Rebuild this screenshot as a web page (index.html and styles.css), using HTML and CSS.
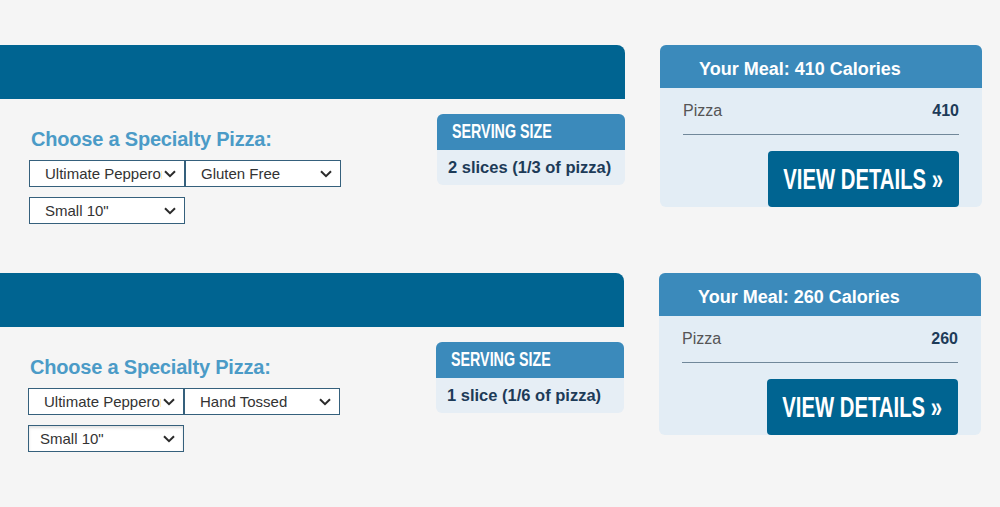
FILE: index.html
```html
<!DOCTYPE html>
<html lang="en">
<head>
  <meta charset="UTF-8">
  <title>Nutrition Calculator</title>
  <link rel="stylesheet" href="styles.css">
</head>
<body>
  <main class="meals">

    <section class="meal">
      <div class="builder">
        <div class="builder-bar"></div>
        <div class="builder-body">
          <div class="picker">
            <h2>Choose a Specialty Pizza:</h2>
            <div class="selects">
              <div class="select-wrap">
                <select><option>Ultimate Pepperoni</option></select>
                <svg class="chevron" viewBox="0 0 12 8"><polyline points="1,1.2 6,6.2 11,1.2"/></svg>
              </div>
              <div class="select-wrap">
                <select><option>Gluten Free</option></select>
                <svg class="chevron" viewBox="0 0 12 8"><polyline points="1,1.2 6,6.2 11,1.2"/></svg>
              </div>
              <div class="select-wrap">
                <select><option>Small 10"</option></select>
                <svg class="chevron" viewBox="0 0 12 8"><polyline points="1,1.2 6,6.2 11,1.2"/></svg>
              </div>
            </div>
          </div>
          <div class="serving">
            <div class="serving-title"><span>SERVING SIZE</span></div>
            <div class="serving-value">2 slices (1/3 of pizza)</div>
          </div>
        </div>
      </div>
      <aside class="summary">
        <div class="summary-head">Your Meal: 410 Calories</div>
        <div class="summary-body">
          <div class="summary-row">
            <span class="item">Pizza</span>
            <span class="cal">410</span>
          </div>
          <a class="details-btn" href="#"><span>VIEW DETAILS &raquo;</span></a>
        </div>
      </aside>
    </section>

    <section class="meal shifted">
      <div class="builder">
        <div class="builder-bar"></div>
        <div class="builder-body">
          <div class="picker">
            <h2>Choose a Specialty Pizza:</h2>
            <div class="selects">
              <div class="select-wrap">
                <select><option>Ultimate Pepperoni</option></select>
                <svg class="chevron" viewBox="0 0 12 8"><polyline points="1,1.2 6,6.2 11,1.2"/></svg>
              </div>
              <div class="select-wrap">
                <select><option>Hand Tossed</option></select>
                <svg class="chevron" viewBox="0 0 12 8"><polyline points="1,1.2 6,6.2 11,1.2"/></svg>
              </div>
              <div class="select-wrap">
                <select class="focused"><option>Small 10"</option></select>
                <svg class="chevron" viewBox="0 0 12 8"><polyline points="1,1.2 6,6.2 11,1.2"/></svg>
              </div>
            </div>
          </div>
          <div class="serving">
            <div class="serving-title"><span>SERVING SIZE</span></div>
            <div class="serving-value">1 slice (1/6 of pizza)</div>
          </div>
        </div>
      </div>
      <aside class="summary">
        <div class="summary-head">Your Meal: 260 Calories</div>
        <div class="summary-body">
          <div class="summary-row">
            <span class="item">Pizza</span>
            <span class="cal">260</span>
          </div>
          <a class="details-btn" href="#"><span>VIEW DETAILS &raquo;</span></a>
        </div>
      </aside>
    </section>

  </main>
</body>
</html>
```

FILE: styles.css
```css
body {
  margin: 0;
  font-family: 'Liberation Sans', Arial, sans-serif;
  background-color: #f5f5f5;
  color: #333333;
}

.meals {
  display: flex;
  flex-direction: column;
  gap: 49px;
  padding-top: 45px;
}

.meal {
  display: flex;
  align-items: flex-start;
}

.meal.shifted {
  margin-left: -1px;
}

.builder {
  width: 625px;
}

.builder-bar {
  height: 54px;
  background: #006491;
  border-top-right-radius: 8px;
}

.builder-body {
  display: flex;
  justify-content: space-between;
  align-items: flex-start;
}

.picker {
  padding-left: 29px;
}

.picker h2 {
  margin: 28px 0 9px;
  padding-left: 2px;
  font-size: 20px;
  line-height: 24px;
  letter-spacing: -0.2px;
  color: #4b9bc7;
}

.selects {
  display: flex;
  flex-wrap: wrap;
  width: 312px;
  row-gap: 10px;
}

.select-wrap {
  position: relative;
  width: 156px;
  height: 27px;
}

.select-wrap select {
  appearance: none;
  -webkit-appearance: none;
  box-sizing: border-box;
  width: 100%;
  height: 27px;
  margin: 0;
  padding: 0 22px 0 15px;
  border: 1px solid #35607c;
  border-radius: 0;
  background: #ffffff;
  font-family: 'Liberation Sans', Arial, sans-serif;
  font-size: 15px;
  color: #333333;
  outline: none;
}

.select-wrap select.focused {
  padding-left: 11px;
  box-shadow: inset 0 2px 3px rgba(0, 0, 0, 0.12);
}

.chevron {
  position: absolute;
  right: 9px;
  top: 10px;
  width: 12px;
  height: 8px;
  pointer-events: none;
}

.chevron polyline {
  fill: none;
  stroke: #2b2b2b;
  stroke-width: 2;
}

.serving {
  width: 188px;
  margin-top: 15px;
  border-radius: 6px;
  background: #e6eef5;
}

.serving-title {
  height: 36px;
  padding: 0 0 2px 15px;
  box-sizing: border-box;
  background: #3b8abb;
  border-radius: 6px 6px 0 0;
  overflow: hidden;
}

.serving-title span {
  display: inline-block;
  font-size: 21px;
  line-height: 34px;
  font-weight: bold;
  color: #ffffff;
  transform: scaleX(0.68);
  transform-origin: left center;
}

.serving-value {
  height: 35px;
  padding-left: 11px;
  font-size: 16.5px;
  line-height: 35px;
  font-weight: bold;
  color: #1d3b58;
}

.summary {
  width: 322px;
  margin-left: 35px;
  background: #e3edf5;
  border-radius: 6px;
}

.summary-head {
  height: 43px;
  box-sizing: border-box;
  padding: 5px 0 0 39px;
  background: #3b8abb;
  border-radius: 6px 6px 0 0;
  font-size: 18px;
  line-height: 38px;
  font-weight: bold;
  color: #ffffff;
}

.summary-body {
  display: flex;
  flex-direction: column;
  padding: 14px 23px 0;
}

.summary-row {
  display: flex;
  justify-content: space-between;
  padding-bottom: 14px;
  border-bottom: 1px solid #71889a;
  font-size: 16px;
  line-height: 18px;
}

.summary-row .item {
  color: #555555;
}

.summary-row .cal {
  font-weight: bold;
  color: #1d3b58;
}

.details-btn {
  display: flex;
  align-items: center;
  justify-content: center;
  align-self: flex-end;
  width: 191px;
  height: 56px;
  margin-top: 16px;
  background: #006491;
  border-radius: 4px;
  text-decoration: none;
  overflow: hidden;
}

.details-btn span {
  display: inline-block;
  font-size: 29px;
  line-height: 30px;
  font-weight: bold;
  color: #ffffff;
  white-space: nowrap;
  transform: scaleX(0.7);
}
```
